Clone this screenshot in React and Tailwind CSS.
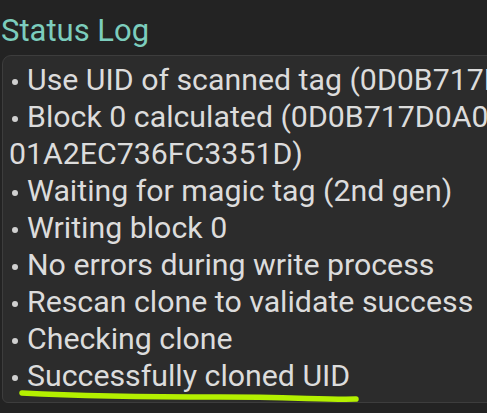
import React from 'react';

const lines = [
  { text: 'Use UID of scanned tag (0D0B717D)', bullet: true },
  { text: 'Block 0 calculated (0D0B717D0A08', bullet: true },
  { text: '01A2EC736FC3351D)', bullet: false },
  { text: 'Waiting for magic tag (2nd gen)', bullet: true },
  { text: 'Writing block 0', bullet: true },
  { text: 'No errors during write process', bullet: true },
  { text: 'Rescan clone to validate success', bullet: true },
  { text: 'Checking clone', bullet: true },
  { text: 'Successfully cloned UID', bullet: true },
];

const App = () => {
  return (
    <div className="w-[487px] h-[413px] overflow-hidden bg-[#232323] font-['Roboto',sans-serif] relative">
      <h2 className="pl-[1px] pt-[11px] text-[31px] leading-[40px] text-[#7ccdbd]">Status Log</h2>
      <div className="mt-[4px] ml-[2px] w-[520px] h-[348px] rounded-tl-[9px] rounded-bl-[6px] border border-[#3d3d3d] bg-[#2c2c2c] pl-[6px] pt-[5px]">
        {lines.map((l, i) => (
          <div key={i} className="flex items-center whitespace-nowrap text-[30.3px] leading-[37px] text-[#dcdcdc]">
            {l.bullet && (
              <span className="shrink-0 w-[18px] flex items-center">
                <span className="ml-[3px] mt-[4px] w-[6px] h-[6px] rounded-full bg-[#d0d0d0]" />
              </span>
            )}
            <span>{l.text}</span>
          </div>
        ))}
      </div>
      {/* highlighter mark under the last line */}
      <svg className="absolute left-0 top-0 pointer-events-none" width="487" height="413" viewBox="0 0 487 413">
        <path d="M22 393 C 80 396, 150 397, 220 397 S 330 400, 356 399" fill="none" stroke="#b4f000" strokeWidth="5.5" strokeLinecap="round" />
      </svg>
    </div>
  );
};

export default App;
